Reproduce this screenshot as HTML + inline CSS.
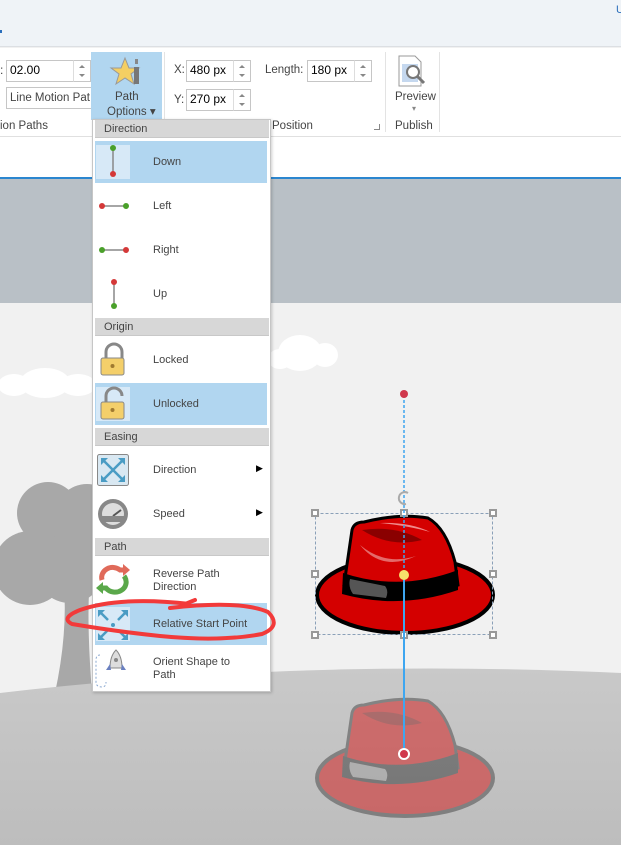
<!DOCTYPE html>
<html><head><meta charset="utf-8"><style>
*{margin:0;padding:0;box-sizing:border-box}
body{width:621px;height:845px;overflow:hidden;position:relative;font-family:"Liberation Sans",sans-serif;background:#f1f1f1;color:#444}
.a{position:absolute}
.t{position:absolute;font-size:11px;color:#444;white-space:nowrap}
.inp{position:absolute;background:#fff;border:1px solid #c6c6c6;font-size:12px;color:#000;padding:2px 0 0 3px;height:22px}
.spin{position:absolute;border:1px solid #c6c6c6;border-left:1px solid #ddd;width:18px;height:22px;background:#fff}
.spin:before{content:"";position:absolute;left:5px;top:4px;border:3px solid transparent;border-bottom:3px solid #888;border-top:0}
.spin:after{content:"";position:absolute;left:5px;top:13px;border:3px solid transparent;border-top:3px solid #888;border-bottom:0}
.hd{position:absolute;left:95px;width:174px;height:18px;background:#d7d7d7;font-size:11px;color:#444;padding:3px 0 0 9px;border-bottom:1px solid #c8c8c8}
.sel{position:absolute;left:95px;width:172px;background:#b1d6f0}
.lab{position:absolute;left:153px;font-size:11px;color:#444;line-height:13px}
</style></head><body>
<div class="a" style="left:0;top:0;width:621px;height:47px;background:#eff3f7;border-bottom:1px solid #dcdfe3"></div>
<div class="t" style="left:616px;top:4px;color:#2a6ebb">U</div>
<div class="a" style="left:0;top:30px;width:2px;height:3px;background:#2a6ebb"></div>
<div class="a" style="left:0;top:48px;width:621px;height:130px;background:#fff;border-bottom:1px solid #ddd"></div>
<div class="a" style="left:0;top:136px;width:621px;height:1px;background:#e0e0e0"></div>
<div class="t" style="left:0;top:63px;font-size:12px">:</div>
<div class="inp" style="left:6px;top:60px;width:68px">02.00</div>
<div class="spin" style="left:73px;top:60px"></div>
<div class="inp" style="left:6px;top:87px;width:86px;color:#444;font-size:11.5px;padding-top:4px">Line Motion Pat</div>
<div class="t" style="left:0;top:120px;font-size:11.5px">ion Paths</div>
<div class="a" style="left:91px;top:52px;width:71px;height:68px;background:#b1d6f0"></div>
<svg class="a" style="left:108px;top:55px" width="36" height="32"><polygon points="17,3 21,13 31,13 23,19 26,29 17,23 8,29 11,19 3,13 13,13" fill="#f4cf63" stroke="#999" stroke-width="1"/><rect x="26" y="12" width="5" height="17" fill="#777"/><rect x="27" y="4" width="3" height="5" fill="#888"/></svg>
<div class="t" style="left:115px;top:91px;font-size:11.5px">Path</div>
<div class="t" style="left:107px;top:104px;font-size:11.5px">Options ▾</div>
<div class="a" style="left:164px;top:52px;width:1px;height:80px;background:#e3e3e3"></div>
<div class="t" style="left:174px;top:64px;font-size:11.5px">X:</div>
<div class="inp" style="left:186px;top:60px;width:48px">480 px</div>
<div class="spin" style="left:233px;top:60px"></div>
<div class="t" style="left:174px;top:94px;font-size:11.5px">Y:</div>
<div class="inp" style="left:186px;top:89px;width:48px">270 px</div>
<div class="spin" style="left:233px;top:89px"></div>
<div class="t" style="left:265px;top:64px;font-size:11.5px">Length:</div>
<div class="inp" style="left:307px;top:60px;width:48px">180 px</div>
<div class="spin" style="left:354px;top:60px"></div>
<div class="t" style="left:272px;top:120px;font-size:11.5px">Position</div>
<div class="a" style="left:374px;top:124px;width:6px;height:6px;border-right:1px solid #888;border-bottom:1px solid #888"></div>
<div class="a" style="left:385px;top:52px;width:1px;height:80px;background:#e3e3e3"></div>
<svg class="a" style="left:396px;top:54px" width="36" height="36"><path d="M3,2 H19 L25,8 V32 H3 Z" fill="#fff" stroke="#999"/><rect x="6" y="10" width="16" height="18" fill="#c5d8ef"/><circle cx="17" cy="18" r="6" fill="#fff" stroke="#777" stroke-width="2"/><line x1="21" y1="22" x2="28" y2="29" stroke="#777" stroke-width="3"/></svg>
<div class="t" style="left:395px;top:91px;font-size:11.5px">Preview</div>
<div class="t" style="left:412px;top:104px;font-size:8px;color:#888">▾</div>
<div class="t" style="left:395px;top:120px;font-size:11.5px">Publish</div>
<div class="a" style="left:439px;top:52px;width:1px;height:80px;background:#e3e3e3"></div>
<div class="a" style="left:0;top:177px;width:621px;height:2px;background:#2b86cf"></div>
<div class="a" style="left:0;top:179px;width:621px;height:124px;background:#b9c0c6"></div>
<svg class="a" style="left:0;top:303px" width="621" height="542">
<defs><linearGradient id="g" x1="0" y1="0" x2="0" y2="1"><stop offset="0" stop-color="#c9c9c9"/><stop offset="1" stop-color="#bdbdbd"/></linearGradient></defs>
<rect width="621" height="542" fill="#f1f1f1"/>
<g fill="#fff"><ellipse cx="45" cy="80" rx="25" ry="15"/><ellipse cx="14" cy="82" rx="16" ry="11"/><ellipse cx="78" cy="82" rx="18" ry="11"/>
<ellipse cx="300" cy="50" rx="22" ry="18"/><ellipse cx="325" cy="52" rx="13" ry="12"/><ellipse cx="280" cy="56" rx="12" ry="10"/></g>
<g fill="#a8a8a8"><circle cx="48" cy="210" r="31"/><circle cx="87" cy="213" r="32"/><circle cx="30" cy="265" r="37"/><circle cx="70" cy="265" r="35"/><path d="M62,265 Q70,320 55,390 H92 Q85,300 92,260 Z"/></g>
<path d="M0,390 Q300,355 621,370 V542 H0 Z" fill="url(#g)"/>
</svg>
<svg class="a" style="left:300px;top:380px" width="210" height="465">
<g id="hat">
<ellipse cx="105" cy="215" rx="88" ry="38" fill="#d40000" stroke="#000" stroke-width="4"/>
<path d="M44,205 L52,150 Q54,142 64,142 Q100,133 128,138 Q146,148 155,182 L158,205 Q100,222 44,205Z" fill="#d40000" stroke="#000" stroke-width="3"/>
<path d="M43,193 Q100,212 158,190 L158,210 Q100,230 42,214Z" fill="#000"/>
<path d="M50,199 L85,206 Q89,211 86,218 L53,214 Q48,207 50,199Z" fill="#555"/>
<path d="M62,150 Q95,145 122,160 Q90,168 62,150Z" fill="#8a0000"/>
<path d="M60,165 Q82,192 116,176 Q85,186 60,165Z" fill="#e46a6a"/>
<path d="M80,143 Q110,142 130,152 Q110,146 80,143Z" fill="#f08a8a"/>
</g>
<g opacity="0.45" transform="translate(0,183)">
<ellipse cx="105" cy="215" rx="88" ry="38" fill="#d40000" stroke="#333" stroke-width="4"/>
<path d="M44,205 L52,150 Q54,142 64,142 Q100,133 128,138 Q146,148 155,182 L158,205 Q100,222 44,205Z" fill="#d40000" stroke="#333" stroke-width="3"/>
<path d="M43,193 Q100,212 158,190 L158,210 Q100,230 42,214Z" fill="#222"/>
<path d="M50,199 L85,206 Q89,211 86,218 L53,214 Q48,207 50,199Z" fill="#999"/>
<path d="M62,150 Q95,145 122,160 Q90,168 62,150Z" fill="#8a0000"/>
</g>
<rect x="15.5" y="133.5" width="177" height="121" fill="none" stroke="#8aa0b8" stroke-dasharray="3,2"/>
<g fill="#fff" stroke="#999" stroke-width="2"><rect x="12" y="130" width="6" height="6"/><rect x="101" y="130" width="6" height="6"/><rect x="190" y="130" width="6" height="6"/><rect x="12" y="191" width="6" height="6"/><rect x="190" y="191" width="6" height="6"/><rect x="12" y="252" width="6" height="6"/><rect x="101" y="252" width="6" height="6"/><rect x="190" y="252" width="6" height="6"/></g>
<line x1="104" y1="15" x2="104" y2="195" stroke="#3ea6f0" stroke-width="1.5" stroke-dasharray="3,2"/>
<line x1="104" y1="195" x2="104" y2="374" stroke="#3ea6f0" stroke-width="2"/>
<circle cx="104" cy="14" r="4" fill="#d0384c"/>
<circle cx="104" cy="195" r="5" fill="#f6e06a"/>
<circle cx="104" cy="374" r="5" fill="#d0384c" stroke="#fff" stroke-width="2"/>
<path d="M108,113 A6,6 0 1 0 106,124" fill="none" stroke="#aaa" stroke-width="2"/>
</svg>
<div class="a" style="left:92px;top:119px;width:179px;height:573px;background:#fff;border:1px solid #c6c6c6;box-shadow:1px 1px 3px rgba(0,0,0,.2)"></div>
<div class="hd" style="top:120px">Direction</div>
<div class="sel" style="top:141px;height:42px"></div>
<div class="a" style="left:96px;top:145px;width:34px;height:34px;background:#d7e9f7"></div>
<div class="lab" style="top:156px">Down</div>
<div class="lab" style="top:200px">Left</div>
<div class="lab" style="top:244px">Right</div>
<div class="lab" style="top:288px">Up</div>
<svg class="a" style="left:92px;top:140px" width="40" height="180">
<line x1="21" y1="8" x2="21" y2="34" stroke="#888" stroke-width="1.5"/><circle cx="21" cy="8" r="3" fill="#4aa02a"/><circle cx="21" cy="34" r="3" fill="#d43838"/>
<line x1="10" y1="66" x2="34" y2="66" stroke="#888" stroke-width="1.5"/><circle cx="10" cy="66" r="3" fill="#d43838"/><circle cx="34" cy="66" r="3" fill="#4aa02a"/>
<line x1="10" y1="110" x2="34" y2="110" stroke="#888" stroke-width="1.5"/><circle cx="10" cy="110" r="3" fill="#4aa02a"/><circle cx="34" cy="110" r="3" fill="#d43838"/>
<line x1="22" y1="142" x2="22" y2="166" stroke="#888" stroke-width="1.5"/><circle cx="22" cy="142" r="3" fill="#d43838"/><circle cx="22" cy="166" r="3" fill="#4aa02a"/>
</svg>
<div class="hd" style="top:318px">Origin</div>
<div class="sel" style="top:383px;height:42px"></div>
<div class="a" style="left:96px;top:387px;width:34px;height:34px;background:#d7e9f7"></div>
<div class="lab" style="top:354px">Locked</div>
<div class="lab" style="top:398px">Unlocked</div>
<svg class="a" style="left:92px;top:340px" width="40" height="85">
<path d="M14,18 V12 A8,8 0 0 1 30,12 V18" fill="none" stroke="#888" stroke-width="3"/><rect x="9" y="18" width="23" height="17" rx="2" fill="#f4cf6a" stroke="#888"/><circle cx="20.5" cy="26" r="2" fill="#a07a30"/>
<path d="M14,62 V56 A8,8 0 0 1 30,56" fill="none" stroke="#888" stroke-width="3"/><rect x="9" y="62" width="23" height="17" rx="2" fill="#f4cf6a" stroke="#888"/><circle cx="20.5" cy="70" r="2" fill="#a07a30"/>
</svg>
<div class="hd" style="top:428px">Easing</div>
<div class="lab" style="top:464px">Direction</div>
<div class="lab" style="top:508px">Speed</div>
<div class="t" style="left:256px;top:463px;font-size:9px;color:#000">▶</div>
<div class="t" style="left:256px;top:507px;font-size:9px;color:#000">▶</div>
<svg class="a" style="left:92px;top:450px" width="40" height="82">
<rect x="5.5" y="4.5" width="31" height="31" rx="2" fill="#d9e8f2" stroke="#888"/><path d="M10,9 L32,31 M32,9 L10,31" stroke="#4a9cc4" stroke-width="2.5"/><path d="M9,8 h7 l-7,7z M33,8 v7 l-7,-7z M9,32 v-7 l7,7z M33,32 h-7 l7,-7z" fill="#4a9cc4"/>
<circle cx="21" cy="64" r="15" fill="#888"/><circle cx="21" cy="64" r="11" fill="#ddd"/><path d="M21,66 L29,60" stroke="#555" stroke-width="2"/><rect x="10" y="66" width="22" height="6" fill="#888"/>
</svg>
<div class="hd" style="top:538px">Path</div>
<div class="lab" style="top:568px">Reverse Path<br>Direction</div>
<div class="sel" style="top:603px;height:42px"></div>
<div class="a" style="left:96px;top:607px;width:34px;height:34px;background:#d7e9f7"></div>
<div class="lab" style="top:618px">Relative Start Point</div>
<div class="lab" style="top:656px">Orient Shape to<br>Path</div>
<svg class="a" style="left:92px;top:560px" width="40" height="130">
<path d="M10,20 A11,10 0 0 1 28,10 H33" fill="none" stroke="#e06a5a" stroke-width="5"/><path d="M31,4 L38,10 L31,16z" fill="#e06a5a"/>
<path d="M32,16 A11,10 0 0 1 14,28 H9" fill="none" stroke="#5aa84a" stroke-width="5"/><path d="M11,22 L4,28 L11,34z" fill="#5aa84a"/>
<path d="M6,50 h7 l-7,7z M36,50 v7 l-7,-7z M6,80 v-7 l7,7z M36,80 h-7 l7,-7z" fill="#4a9cc4"/><path d="M8,52 L16,60 M34,52 L26,60 M8,78 L16,70 M34,78 L26,70" stroke="#4a9cc4" stroke-width="2.5"/><circle cx="21" cy="65" r="2" fill="#4a9cc4"/>
<path d="M8,95 Q4,95 4,100 V122 Q4,127 10,127 Q14,127 14,122" fill="none" stroke="#8aa8d0" stroke-dasharray="2,2"/>
<path d="M24,90 Q30,96 30,108 H18 Q18,96 24,90Z" fill="#ddd" stroke="#888"/><path d="M18,104 L14,110 H19z M30,104 L34,110 H29z" fill="#6a80c0"/><circle cx="24" cy="100" r="2" fill="#888"/>
</svg>
<svg class="a" style="left:0;top:590px" width="300" height="70">
<path d="M195,10 Q170,20 190,14 Q120,6 80,20 Q60,28 72,34 Q120,42 160,46 Q220,52 262,44 Q282,36 268,22 Q240,10 170,18" fill="none" stroke="#f23a3a" stroke-width="4" stroke-linecap="round"/>
</svg>
</body></html>
